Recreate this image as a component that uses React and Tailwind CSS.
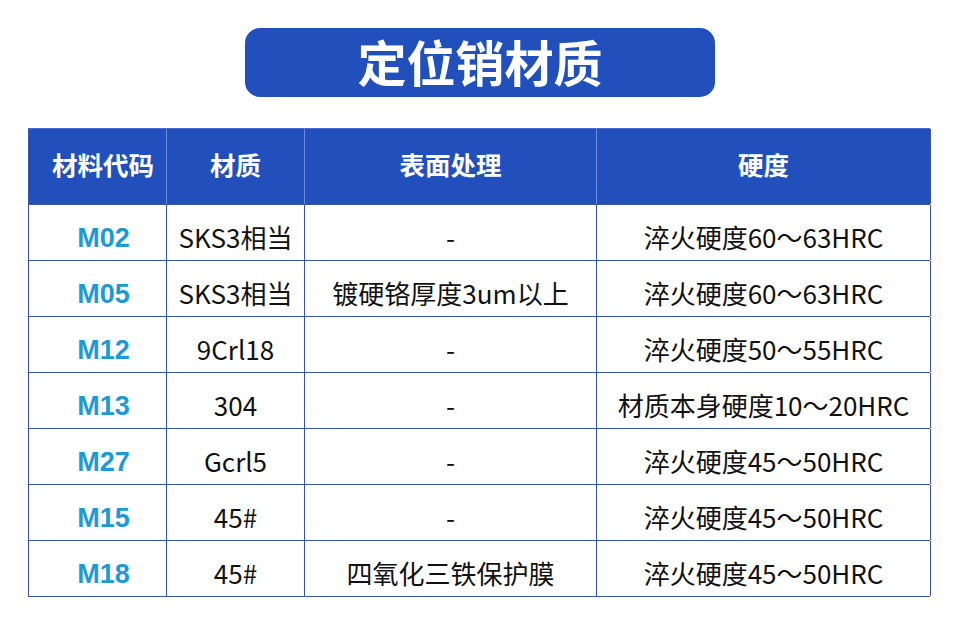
export default function App() {
  const rows = [
    ["M02", "SKS3相当", "-", "淬火硬度60～63HRC"],
    ["M05", "SKS3相当", "镀硬铬厚度3um以上", "淬火硬度60～63HRC"],
    ["M12", "9Crl18", "-", "淬火硬度50～55HRC"],
    ["M13", "304", "-", "材质本身硬度10～20HRC"],
    ["M27", "Gcrl5", "-", "淬火硬度45～50HRC"],
    ["M15", "45#", "-", "淬火硬度45～50HRC"],
    ["M18", "45#", "四氧化三铁保护膜", "淬火硬度45～50HRC"],
  ];
  const headers = ["材料代码", "材质", "表面处理", "硬度"];
  return (
    <div
      className="w-[960px] h-[629px] bg-white flex flex-col items-center"
      style={{ fontFamily: '"Noto Sans CJK SC", "Noto Sans", sans-serif' }}
    >
      <div className="mt-[28px] w-[470px] h-[69px] rounded-[15px] bg-[#2150bd] flex items-center justify-center pb-[4px]">
        <span className="text-white text-[49px] font-bold leading-none">定位销材质</span>
      </div>
      <div className="mt-[31px] w-[902px] ml-[-2px] border-l border-[#3a52a8]">
        <div className="grid grid-cols-[138px_138px_292px_334px] h-[76px] bg-[#2150bd] border-t border-[#4a6bd0]">
          {headers.map((h, i) => (
            <div
              key={i}
              className={`flex items-center justify-center text-white text-[25.5px] font-bold pb-[4px] ${i === 0 ? "pl-[11px]" : ""} ${i < 3 ? "border-r border-[#6d8be0]" : "border-r border-[#3a52a8]"}`}
            >
              {h}
            </div>
          ))}
        </div>
        {rows.map((r, ri) => (
          <div key={ri} className="grid grid-cols-[138px_138px_292px_334px] h-[56px] border-t border-[#3a52a8]">
            {r.map((c, ci) => (
              <div
                key={ci}
                className={`flex items-center justify-center border-r border-[#3a52a8] ${ci === 0 ? "pt-[11px] pl-[12px]" : "pt-[9px]"}`}
              >
                {ci === 0 ? (
                  <span
                    className="text-[#1b9ad8] text-[27px] font-bold leading-none"
                    style={{ fontFamily: '"Liberation Sans", Arial, sans-serif' }}
                  >
                    {c}
                  </span>
                ) : (
                  <span className="text-[#111] text-[26px] leading-none">{c}</span>
                )}
              </div>
            ))}
          </div>
        ))}
        <div className="border-t border-[#3a52a8]" />
      </div>
    </div>
  );
}
